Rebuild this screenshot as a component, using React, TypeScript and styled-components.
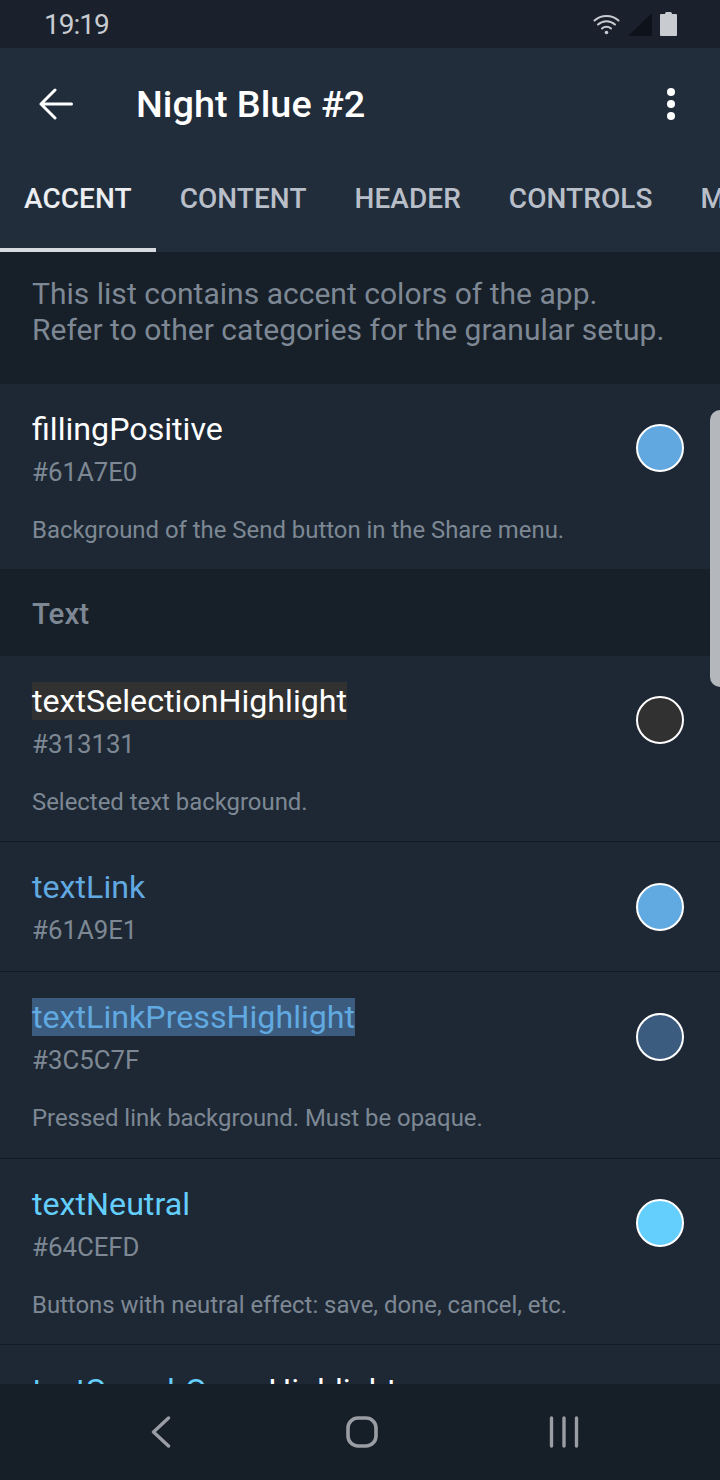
import styled, { createGlobalStyle } from 'styled-components'

const GlobalStyle = createGlobalStyle`
    html, body {
        margin: 0;
        padding: 0;
        background: #1e2834;
    }
    * {
        box-sizing: border-box;
    }
`

const Screen = styled.div`
    position: relative;
    width: 720px;
    height: 1480px;
    overflow: hidden;
    display: flex;
    flex-direction: column;
    background: #1e2834;
    font-family: Roboto, "Liberation Sans", sans-serif;
`

const StatusBar = styled.div`
    flex: none;
    height: 48px;
    display: flex;
    align-items: center;
    justify-content: space-between;
    padding: 0 43px 0 44px;
    background: #1a212d;
`

const Clock = styled.span`
    font-size: 28px;
    letter-spacing: -1px;
    color: #c8cbd0;
`

const StatusIcons = styled.div`
    display: flex;
    align-items: center;
    gap: 8px;
`

const Toolbar = styled.div`
    flex: none;
    height: 112px;
    display: flex;
    align-items: center;
    padding: 0 45px 0 39px;
    background: #212d3b;
`

const Title = styled.h1`
    flex: 1;
    margin: 0 0 0 63px;
    font-size: 37.8px;
    font-weight: 500;
    color: #fff;
`

const TabBar = styled.div`
    flex: none;
    height: 92px;
    display: flex;
    background: #212d3b;
`

const Tab = styled.div<{ $active?: boolean }>`
    flex: none;
    height: 92px;
    display: flex;
    align-items: center;
    padding: 0 24px 12px;
    font-size: 28px;
    letter-spacing: 0.06px;
    font-weight: 500;
    white-space: nowrap;
    color: ${p => (p.$active ? '#eceef1' : '#b9bfc9')};
    border-bottom: 4px solid ${p => (p.$active ? '#d6d9dd' : 'transparent')};
`

const Hint = styled.div`
    flex: none;
    height: 132px;
    padding: 24px 32px 0;
    background: #171f28;
    font-size: 30px;
    letter-spacing: 0.02px;
    line-height: 36px;
    color: #7d8894;
`

const List = styled.div`
    flex: 1;
    overflow: hidden;
`

const Row = styled.div<{ $divider?: boolean }>`
    display: flex;
    align-items: flex-start;
    justify-content: space-between;
    padding: 26px 36px 24.3px 32px;
    background: #1e2834;
    border-bottom: ${p => (p.$divider ? '1px solid #141b24' : 'none')};
`

const RowText = styled.div`
    display: flex;
    flex-direction: column;
    align-items: flex-start;
`

const Name = styled.span<{ $color?: string; $mark?: string }>`
    font-size: 32.2px;
    line-height: 38px;
    white-space: nowrap;
    color: ${p => p.$color ?? '#fff'};
    background: ${p => p.$mark ?? 'transparent'};
`

const NameTail = styled.span`
    color: #fff;
`

const Value = styled.span`
    margin-top: 7px;
    font-size: 25.8px;
    line-height: 34px;
    color: #7d8894;
`

const Description = styled.span`
    margin-top: 27px;
    font-size: 23.9px;
    line-height: 29px;
    color: #7d8894;
`

const Swatch = styled.span<{ $color: string }>`
    flex: none;
    margin-top: 14.4px;
    width: 48px;
    height: 48px;
    border-radius: 50%;
    border: 2px solid #fff;
    background: ${p => p.$color};
`

const SectionHeader = styled.div`
    height: 86.6px;
    display: flex;
    align-items: center;
    padding: 3px 0 0 32px;
    background: #171f28;
    font-size: 29.5px;
    font-weight: 500;
    color: #7d8894;
`

const ScrollThumb = styled.div`
    position: absolute;
    top: 410px;
    right: 0;
    width: 10px;
    height: 277px;
    border-radius: 10px 0 0 10px;
    background: #b4b7bc;
`

const NavBar = styled.div`
    flex: none;
    height: 96px;
    display: flex;
    align-items: center;
    padding-left: 151px;
    background: #161e27;
`

const NavIcon = styled.svg<{ $gap?: number }>`
    flex: none;
    margin-left: ${p => p.$gap ?? 0}px;
`

const rows = [
    { name: 'textSelectionHighlight', value: '#313131', desc: 'Selected text background.', mark: '#313131', swatch: '#313131' },
    { name: 'textLink', value: '#61A9E1', color: '#61a9e1', swatch: '#61a9e1' },
    { name: 'textLinkPressHighlight', value: '#3C5C7F', desc: 'Pressed link background. Must be opaque.', color: '#61a9e1', mark: '#3c5c7f', swatch: '#3c5c7f' },
    { name: 'textNeutral', value: '#64CEFD', desc: 'Buttons with neutral effect: save, done, cancel, etc.', color: '#64cefd', swatch: '#64cefd' },
]

type ThemeRowProps = {
    name: string,
    value: string,
    desc?: string,
    color?: string,
    mark?: string,
    swatch: string,
    divider?: boolean
}

const ThemeRow = ({ name, value, desc, color, mark, swatch, divider }: ThemeRowProps) => (
    <Row $divider={divider}>
        <RowText>
            <Name $color={color} $mark={mark}>{name}</Name>
            <Value>{value}</Value>
            {desc && <Description>{desc}</Description>}
        </RowText>
        <Swatch $color={swatch} />
    </Row>
)

export default function App() {
    return (
        <Screen>
            <GlobalStyle />
            <StatusBar>
                <Clock>19:19</Clock>
                <StatusIcons>
                    <svg width="27" height="21" viewBox="0 0 27 21" fill="none" stroke="#c8cbd0" strokeWidth="2" strokeLinecap="round">
                        <path d="M1.5 6.5 C8 0.5 19 0.5 25.5 6.5" />
                        <path d="M5 10.5 C10 6 17 6 22 10.5" />
                        <path d="M9 14.5 C11.5 12.2 15.5 12.2 18 14.5" />
                        <circle cx="13.5" cy="18.5" r="1.8" fill="#c8cbd0" stroke="none" />
                    </svg>
                    <svg width="24" height="23" viewBox="0 0 24 23">
                        <path d="M24 0 V23 H0 Z" fill="#0e131b" />
                    </svg>
                    <svg width="17" height="24" viewBox="0 0 17 24">
                        <path d="M5 2 Q5 0 6.5 0 H10.5 Q12 0 12 2 H16 Q17 2 17 3 V23 Q17 24 16 24 H1 Q0 24 0 23 V3 Q0 2 1 2 Z" fill="#c8cbd0" />
                    </svg>
                </StatusIcons>
            </StatusBar>
            <Toolbar>
                <svg width="34" height="32" viewBox="0 0 34 32" fill="none" stroke="#fff" strokeWidth="3" strokeLinecap="round" strokeLinejoin="round">
                    <path d="M32.5 16 H2 M16 2 L2 16 L16 30" />
                </svg>
                <Title>Night Blue #2</Title>
                <svg width="8" height="32" viewBox="0 0 8 32" fill="#fff">
                    <circle cx="4" cy="4" r="4" />
                    <circle cx="4" cy="16" r="4" />
                    <circle cx="4" cy="28" r="4" />
                </svg>
            </Toolbar>
            <TabBar>
                <Tab $active>ACCENT</Tab>
                <Tab>CONTENT</Tab>
                <Tab>HEADER</Tab>
                <Tab>CONTROLS</Tab>
                <Tab>MEDIA</Tab>
            </TabBar>
            <Hint>
                This list contains accent colors of the app.<br />
                Refer to other categories for the granular setup.
            </Hint>
            <List>
                <ThemeRow name="fillingPositive" value="#61A7E0" desc="Background of the Send button in the Share menu." swatch="#61a7e0" />
                <SectionHeader>Text</SectionHeader>
                {rows.map(r => <ThemeRow key={r.name} {...r} divider />)}
                <Row>
                    <RowText>
                        <Name $color="#64cefd">textSearchQuery<NameTail>Highlight</NameTail></Name>
                    </RowText>
                </Row>
            </List>
            <ScrollThumb />
            <NavBar>
                <NavIcon width="20" height="32" viewBox="0 0 20 32" fill="none" stroke="#9a9da3" strokeWidth="3.4" strokeLinecap="round" strokeLinejoin="round">
                    <path d="M17.5 2 L2.5 16 L17.5 30" />
                </NavIcon>
                <NavIcon $gap={175} width="32" height="32" viewBox="0 0 32 32" fill="none" stroke="#9a9da3" strokeWidth="3.6">
                    <rect x="2" y="2" width="28" height="28" rx="10" />
                </NavIcon>
                <NavIcon $gap={171} width="30" height="32" viewBox="0 0 30 32" fill="none" stroke="#9a9da3" strokeWidth="3.4" strokeLinecap="round">
                    <path d="M2.5 2 V30 M15 2 V30 M27.5 2 V30" />
                </NavIcon>
            </NavBar>
        </Screen>
    )
}
